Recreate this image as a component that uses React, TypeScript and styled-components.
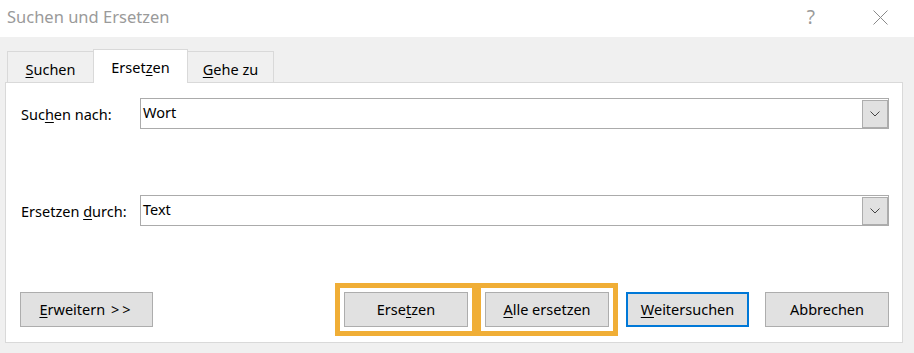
import React from "react";
import styled, { createGlobalStyle } from "styled-components";

const Global = createGlobalStyle`
  html, body { margin: 0; padding: 0; background: #f0f0f0; }
  body { font-family: "Noto Sans", "Open Sans", sans-serif; color: #000; }
  #root { width: 914px; height: 353px; }
`;

const Dialog = styled.div`
  width: 914px;
  height: 353px;
  background: #f0f0f0;
  display: flex;
  flex-direction: column;
  overflow: hidden;
`;

const TitleBar = styled.div`
  height: 37px;
  flex: 0 0 37px;
  background: #fff;
  display: flex;
  align-items: center;
  padding: 0 26px 0 7px;
`;

const Title = styled.div`
  flex: 1;
  font-size: 16.5px;
  line-height: 20px;
  color: #9a9a9a;
  margin-top: -3px;
`;

const HelpGlyph = styled.div`
  font-size: 19px;
  line-height: 20px;
  color: #9a9a9a;
  margin-right: 58px;
  margin-top: -3px;
`;

const CloseGlyph = styled.svg`
  width: 15px;
  height: 15px;
  margin-top: -3px;
  display: block;
`;

const TabStrip = styled.div`
  height: 45px;
  flex: 0 0 45px;
  display: flex;
  align-items: flex-end;
  padding-left: 7px;
`;

const Tab = styled.div<{ $active?: boolean; $w: number }>`
  width: ${(p) => p.$w}px;
  box-sizing: border-box;
  height: ${(p) => (p.$active ? 34 : 31)}px;
  margin-bottom: ${(p) => (p.$active ? -1 : 0)}px;
  position: relative;
  z-index: ${(p) => (p.$active ? 2 : 0)};
  background: ${(p) => (p.$active ? "#fff" : "#f0f0f0")};
  border: 1px solid #d9d9d9;
  border-bottom: none;
  margin-left: ${(p) => (p.$active ? -1 : 0)}px;
  margin-right: ${(p) => (p.$active ? -1 : 0)}px;
  display: flex;
  align-items: center;
  justify-content: center;
  font-size: 14.5px;
  padding-top: ${(p) => (p.$active ? 0 : 3)}px;
`;

const Panel = styled.div`
  margin: 0 11px 10px 5px;
  flex: 1;
  background: #fff;
  border: 1px solid #d9d9d9;
  padding: 15px 13px 0 14px;
  display: flex;
  flex-direction: column;
  position: relative;
  z-index: 1;
`;

const FieldRow = styled.div<{ $top: number }>`
  display: grid;
  grid-template-columns: 120px 1fr;
  align-items: center;
  margin-top: ${(p) => p.$top}px;
`;

const Label = styled.label`
  font-size: 14.5px;
  padding-left: 1px;
  margin-top: 1px;
`;

const Combo = styled.div`
  height: 31px;
  box-sizing: border-box;
  border: 1px solid #ababab;
  display: flex;
  align-items: center;
`;

const ComboText = styled.div`
  flex: 1;
  font-size: 14.5px;
  padding-left: 2px;
  margin-top: -3px;
`;

const DropButton = styled.div`
  width: 26px;
  height: 28px;
  box-sizing: border-box;
  background: #e1e1e1;
  border: 1px solid #adadad;
  display: flex;
  align-items: center;
  justify-content: center;
`;

const ButtonRow = styled.div`
  display: flex;
  align-items: center;
  margin-top: 57px;
  height: 53px;
`;

const Button = styled.div<{ $w: number; $default?: boolean }>`
  width: ${(p) => p.$w}px;
  height: 35px;
  box-sizing: border-box;
  background: #e1e1e1;
  border: ${(p) => (p.$default ? "2px solid #0078d7" : "1px solid #adadad")};
  display: flex;
  align-items: center;
  justify-content: center;
  font-size: 14.5px;
  padding-bottom: 2px;
`;

const Spacer = styled.div`
  flex: 1;
`;

const Highlight = styled.div<{ $overlap?: boolean }>`
  border: 5px solid #f0ae36;
  padding: 4px;
  background: #fff;
  margin-left: ${(p) => (p.$overlap ? -1 : 0)}px;
`;

const Gap = styled.div<{ $w: number }>`
  width: ${(p) => p.$w}px;
`;

const Key = styled.u`
  text-decoration-thickness: 1px;
  text-underline-offset: 2px;
`;

const Arrows = styled.span`
  letter-spacing: 3px;
  margin-left: 2px;
`;

const Chevron = () => (
  <svg width="10" height="6" viewBox="0 0 10 6">
    <path d="M0.5 0.5 L5 5 L9.5 0.5" fill="none" stroke="#444" strokeWidth="1" />
  </svg>
);

export default function App() {
  return (
    <Dialog>
      <Global />
      <TitleBar>
        <Title>Suchen und Ersetzen</Title>
        <HelpGlyph>?</HelpGlyph>
        <CloseGlyph viewBox="0 0 15 15">
          <path d="M0.5 0.5 L14.5 14.5 M14.5 0.5 L0.5 14.5" stroke="#8a8a8a" strokeWidth="1" fill="none" />
        </CloseGlyph>
      </TitleBar>
      <TabStrip>
        <Tab $w={87}>
          <span>
            <Key>S</Key>uchen
          </span>
        </Tab>
        <Tab $w={95} $active>
          <span>
            Erset<Key>z</Key>en
          </span>
        </Tab>
        <Tab $w={87}>
          <span>
            <Key>G</Key>ehe zu
          </span>
        </Tab>
      </TabStrip>
      <Panel>
        <FieldRow $top={0}>
          <Label>
            Suc<Key>h</Key>en nach:
          </Label>
          <Combo>
            <ComboText>Wort</ComboText>
            <DropButton>
              <Chevron />
            </DropButton>
          </Combo>
        </FieldRow>
        <FieldRow $top={66}>
          <Label>
            Ersetzen <Key>d</Key>urch:
          </Label>
          <Combo>
            <ComboText>Text</ComboText>
            <DropButton>
              <Chevron />
            </DropButton>
          </Combo>
        </FieldRow>
        <ButtonRow>
          <Button $w={133}>
            <span>
              <Key>E</Key>rweitern <Arrows>&gt;&gt;</Arrows>
            </span>
          </Button>
          <Spacer />
          <Highlight>
            <Button $w={124}>
              <span>
                Erse<Key>t</Key>zen
              </span>
            </Button>
          </Highlight>
          <Highlight $overlap>
            <Button $w={124}>
              <span>
                <Key>A</Key>lle ersetzen
              </span>
            </Button>
          </Highlight>
          <Gap $w={8} />
          <Button $w={123} $default>
            <span>
              <Key>W</Key>eitersuchen
            </span>
          </Button>
          <Gap $w={16} />
          <Button $w={124}>Abbrechen</Button>
        </ButtonRow>
      </Panel>
    </Dialog>
  );
}
